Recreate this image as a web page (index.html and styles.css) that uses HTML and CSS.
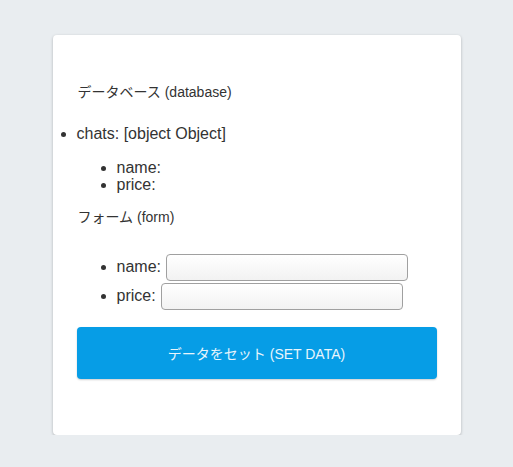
FILE: index.html
```html
<!DOCTYPE html>
<html>
<head>
<meta charset="utf-8">
<link rel="stylesheet" href="styles.css">
</head>
<body>
<div class="card">
  <p class="title">データベース (database)</p>
  <ul class="db">
    <li>chats: [object Object]
      <ul class="sub">
        <li>name: </li>
        <li>price: </li>
      </ul>
    </li>
  </ul>
  <p class="title form-title">フォーム (form)</p>
  <ul class="form">
    <li>name: <input class="field" type="text"></li>
    <li>price: <input class="field" type="text"></li>
  </ul>
  <button class="btn">データをセット (SET DATA)</button>
</div>
</body>
</html>
```

FILE: styles.css
```css
html, body {
  margin: 0;
  padding: 0;
}
body {
  background: #e9edf0;
  font-family: "Liberation Sans", "Noto Sans CJK JP", sans-serif;
  color: #333;
  font-size: 16px;
}
.card {
  box-sizing: border-box;
  width: 408px;
  margin: 35px auto 0;
  padding: 24px 24px 56px;
  background: #fff;
  border-radius: 4px;
  box-shadow: 0 1px 3px rgba(0, 0, 0, 0.25);
}
.title {
  font-size: 14px;
  margin: 25px 0 0 1px;
  line-height: 16px;
}
.db {
  margin: 25px 0 0;
  padding: 0;
  list-style: disc;
}
.db > li {
  line-height: 18px;
}
.sub {
  margin: 16px 0 0;
  padding-left: 40px;
  list-style: disc;
}
.sub li {
  line-height: 17px;
}
.form-title {
  margin-top: 16px;
}
.form {
  margin: 27px 0 0;
  padding-left: 40px;
  list-style: disc;
}
.form li {
  height: 29px;
  line-height: 29px;
}
.field {
  box-sizing: border-box;
  width: 242px;
  height: 27px;
  vertical-align: middle;
  border: 1px solid #a0a0a0;
  border-radius: 4px;
  background: linear-gradient(#ffffff, #f2f2f2);
  margin: 0 0 0 1px;
  padding: 0 4px;
}
.btn {
  display: block;
  width: 360px;
  height: 52px;
  margin-top: 17px;
  border: none;
  border-radius: 4px;
  background: #069de6;
  color: #e8f5fc;
  font-family: "Liberation Sans", "Noto Sans CJK JP", sans-serif;
  font-size: 14px;
  box-shadow: 0 1px 2px rgba(0, 0, 0, 0.2);
}
```
